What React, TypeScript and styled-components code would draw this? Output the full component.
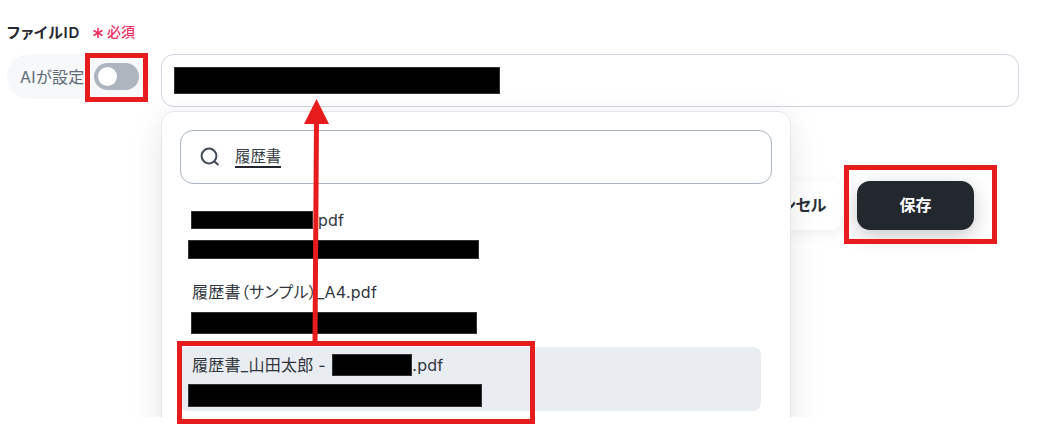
import { Asterisk } from 'lucide-react'
import styled, { createGlobalStyle } from 'styled-components'

const GlobalStyle = createGlobalStyle`
  * {
    box-sizing: border-box;
  }

  body {
    margin: 0;
    background: #fff;
    color: #23272f;
    font-family: Inter, "Noto Sans CJK JP", sans-serif;
    font-feature-settings: "palt";
    font-size: 16px;
  }
`

type FileRow = {
  prefix?: string;
  suffix: string;
  hiddenWidth?: number;
  hiddenHeight?: number;
  offset?: number;
  gap: number;
  idIndent: number;
  idWidth: number;
  idHeight: number;
  selected?: boolean;
}

const files: FileRow[] = [
  { suffix: '.pdf', hiddenWidth: 122, hiddenHeight: 18, offset: -1, gap: 8, idIndent: -4, idWidth: 291, idHeight: 19 },
  { suffix: '履歴書（サンプル）_A4.pdf', gap: 7, idIndent: -1, idWidth: 286, idHeight: 22 },
  { prefix: '履歴書_山田太郎 - ネ', suffix: '.pdf', hiddenWidth: 80, hiddenHeight: 22, offset: -14, gap: 7, idIndent: -4, idWidth: 294, idHeight: 23, selected: true },
]

export default function App() {
  return (
    <Canvas>
      <GlobalStyle />
      <Page>
        <LabelRow>
          <Label>ファイルID</Label>
          <Required>
            <Asterisk size={18} strokeWidth={2.2} />
            必須
          </Required>
        </LabelRow>
        <FieldRow>
          <AiSetting>
            <AiLabel>AIが設定</AiLabel>
            <Toggle><Knob /></Toggle>
          </AiSetting>
          <Field>
            <Redacted $width={326} $height={27} />
            <Dropdown>
              <SearchBox>
                <SearchIcon />
                <Query>履歴書</Query>
              </SearchBox>
              <FileList>
                {files.map((file) => <FileItem key={file.idWidth} file={file} />)}
              </FileList>
            </Dropdown>
          </Field>
        </FieldRow>
        <Actions>
          <Button>キャンセル</Button>
          <Button $primary>保存</Button>
        </Actions>
      </Page>
      <Marker $x={85} $y={53} $width={63} $height={49} />
      <Marker $x={844} $y={165} $width={153} $height={79} />
      <Arrow width="30" height="250" viewBox="0 0 30 250">
        <path d="M15.5 20 L14 246" stroke="#e81c1c" strokeWidth="5" />
        <path d="M15.5 0 L28 25 H3 Z" fill="#e81c1c" />
      </Arrow>
      <Marker $x={177} $y={341} $width={358} $height={83} />
    </Canvas>
  )
}

function FileItem({ file }: { file: FileRow }) {
  return (
    <Item $selected={file.selected}>
      <FileName>
        {file.prefix && <span>{file.prefix}</span>}
        {file.hiddenWidth && (
          <Redacted $width={file.hiddenWidth} $height={file.hiddenHeight ?? 20} $indent={file.offset} />
        )}
        <FileText>{file.suffix}</FileText>
      </FileName>
      <Redacted $width={file.idWidth} $height={file.idHeight} $indent={file.idIndent} $top={file.gap} />
    </Item>
  )
}

function SearchIcon() {
  return (
    <svg width="20" height="20" viewBox="0 0 20 20" fill="none" stroke="#414a57" strokeWidth="2">
      <circle cx="9" cy="9" r="7.4" />
      <path d="M14.2 14.2 L18.4 18" />
    </svg>
  )
}

const Canvas = styled.div`
  position: relative;
  width: 1050px;
  height: 425px;
  overflow: hidden;
`

const Page = styled.div`
  height: 417px;
  padding: 19px 31px 0 7px;
  overflow: hidden;
`

const LabelRow = styled.div`
  display: flex;
  align-items: center;
  gap: 9px;
  height: 24px;
`

const Label = styled.span`
  font-size: 15px;
  font-weight: 600;
  letter-spacing: 0.75px;
`

const Required = styled.span`
  display: flex;
  align-items: center;
  color: #f0315f;
  font-size: 14px;
  font-weight: 500;

  svg {
    margin-top: 3px;
  }
`

const FieldRow = styled.div`
  display: flex;
  gap: 9px;
  margin-top: 11px;
`

const AiSetting = styled.div`
  display: flex;
  align-items: center;
  justify-content: space-between;
  width: 145px;
  height: 45px;
  padding: 0 13px 0 13px;
  border-radius: 23px;
  background: #f7f8fa;
  color: #606a78;
  white-space: nowrap;
`

const AiLabel = styled.span`
  padding-bottom: 2px;
  letter-spacing: 0.3px;
`

const Toggle = styled.div`
  width: 45px;
  height: 27px;
  padding: 4px;
  border-radius: 14px;
  background: #adb5bf;
`

const Knob = styled.div`
  width: 19px;
  height: 19px;
  border-radius: 50%;
  background: #fff;
`

const Field = styled.div`
  position: relative;
  display: flex;
  align-items: center;
  flex: 1;
  height: 53px;
  padding-left: 12px;
  border: 1px solid #cfd6df;
  border-radius: 13px;
`

const Redacted = styled.div<{ $width: number; $height: number; $indent?: number; $top?: number }>`
  position: relative;
  flex-shrink: 0;
  width: ${({ $width }) => $width}px;
  height: ${({ $height }) => $height}px;
  margin-left: ${({ $indent = 0 }) => $indent}px;
  margin-top: ${({ $top = 0 }) => $top}px;
  border: 1px solid #333;
  background: #000;
`

const Dropdown = styled.div`
  position: absolute;
  top: 56px;
  left: -1px;
  z-index: 1;
  width: 630px;
  height: 360px;
  padding: 18px;
  border: 1px solid #e3e5e8;
  border-radius: 13px;
  background: #fff;
  box-shadow: 0 8px 32px rgba(0, 0, 0, 0.1);
`

const SearchBox = styled.div`
  display: flex;
  align-items: center;
  gap: 15px;
  height: 54px;
  padding-left: 19px;
  border: 1px solid #abb5c0;
  border-radius: 13px;
`

const Query = styled.span`
  border-bottom: 2px solid #23272f;
  color: #3a3f48;
  font-size: 15.4px;
  line-height: 19px;
`

const FileList = styled.div`
  display: flex;
  flex-direction: column;
  gap: 8.5px;
  width: 581px;
  margin-top: 18px;
`

const Item = styled.div<{ $selected?: boolean }>`
  height: 64px;
  padding: 6px 12px 0;
  border-radius: 8px;
  background: ${({ $selected }) => ($selected ? '#e9ecf1' : 'transparent')};
`

const FileName = styled.div`
  display: flex;
  align-items: center;
  height: 24px;
  color: #30353d;
  letter-spacing: 0.27px;
  line-height: 22px;
  white-space: pre;
`

const FileText = styled.span`
  padding-bottom: 1px;
`

const Actions = styled.div`
  display: flex;
  justify-content: flex-end;
  gap: 14px;
  margin-top: 74px;
  padding-right: 45px;
`

const Button = styled.button<{ $primary?: boolean }>`
  width: 117px;
  height: 49px;
  padding: ${({ $primary }) => ($primary ? '0 0 3px' : '0 0 3px 10px')};
  border: 0;
  border-radius: 13px;
  background: ${({ $primary }) => ($primary ? '#23282f' : '#fff')};
  color: ${({ $primary }) => ($primary ? '#fff' : '#2b3038')};
  box-shadow: ${({ $primary }) => ($primary ? '0 6px 20px rgba(0, 0, 0, 0.22)' : '0 3px 14px rgba(0, 0, 0, 0.07)')};
  font: inherit;
  font-feature-settings: inherit;
  font-weight: 700;
`

const Marker = styled.div<{ $x: number; $y: number; $width: number; $height: number }>`
  position: absolute;
  z-index: 2;
  left: ${({ $x }) => $x}px;
  top: ${({ $y }) => $y}px;
  width: ${({ $width }) => $width}px;
  height: ${({ $height }) => $height}px;
  border: 5px solid #e81c1c;
`

const Arrow = styled.svg`
  position: absolute;
  z-index: 2;
  left: 301px;
  top: 99px;
`
